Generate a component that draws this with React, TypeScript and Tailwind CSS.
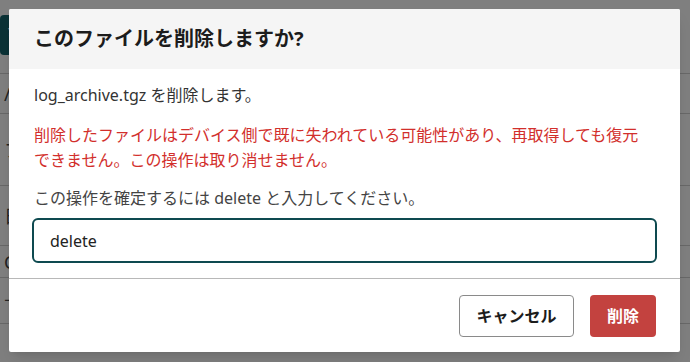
import { useState } from "react";

const font = { fontFamily: '"Noto Sans", "Noto Sans CJK JP", sans-serif' };

// faint page that sits behind the modal overlay
function BackPage() {
  const rows = [
    { h: "h-[40px]", mark: "/" },
    { h: "h-[72px]", mark: "フ:" },
    { h: "h-[60px]", mark: "日" },
    { h: "h-[32px]", mark: "C" },
    { h: "h-[46px]", mark: "十" },
    { h: "h-[10px]", mark: "" },
  ];
  return (
    <div className="flex h-full flex-col">
      <div className="h-[15px]" />
      <div className="flex h-[58px] items-start">
        <div className="h-[40px] w-[60px] rounded bg-[#17656c] px-2 pt-2 text-sm font-bold text-white">
          ¥+
        </div>
      </div>
      {rows.map((r, i) => (
        <div key={i} className={`${r.h} flex items-center border-t border-[#d0d0d0] pl-1 text-lg text-[#444]`}>
          {r.mark}
        </div>
      ))}
    </div>
  );
}

export default function App() {
  const [value, setValue] = useState("delete");

  return (
    <div className="relative h-[362px] w-[690px] overflow-hidden bg-white" style={font}>
      <BackPage />
      <div className="absolute inset-0 flex items-center justify-center bg-black/50">
        <div className="-mt-[1px] -ml-[1px] flex w-[671px] flex-col overflow-hidden rounded-[2px] bg-white shadow-lg">
          <div className="flex h-[60px] items-center bg-[#f5f5f5] px-[25px]">
            <h2 className="text-[20px] font-bold text-[#1c1c1c]">このファイルを削除しますか?</h2>
          </div>

          <div className="flex flex-col px-[23px] pt-[14px] pb-[15px] text-[16px] leading-[25px]">
            <p className="pl-[2px] text-[#333]">log_archive.tgz を削除します。</p>
            <p className="mt-[15px] pl-[2px] pr-[14px] text-[#d22f2c]">
              削除したファイルはデバイス側で既に失われている可能性があり、再取得しても復元できません。この操作は取り消せません。
            </p>
            <p className="mt-[13px] pl-[2px] text-[#444]">この操作を確定するには delete と入力してください。</p>
            <input
              value={value}
              onChange={(e) => setValue(e.target.value)}
              className="mt-[7px] h-[45px] w-full rounded-[6px] border-2 border-[#0e4a50] px-[16px] text-[16px] text-[#222] outline-none"
            />
          </div>

          <div className="flex justify-end gap-[16px] border-t border-[#b8b8b8] px-[24px] pt-[16px] pb-[15px]">
            <button className="h-[42px] w-[115px] rounded-[4px] border border-[#8a8a8a] bg-white text-[16px] font-bold text-[#1c1c1c]">
              キャンセル
            </button>
            <button className="h-[42px] w-[66px] rounded-[4px] bg-[#c3423f] text-[16px] font-bold text-white">
              削除
            </button>
          </div>
        </div>
      </div>
    </div>
  );
}
